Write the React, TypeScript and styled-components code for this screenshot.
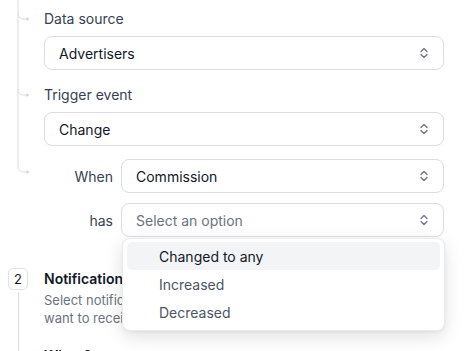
import React from 'react';
import styled, { createGlobalStyle } from 'styled-components';

const GlobalStyle = createGlobalStyle`
  html, body {
    margin: 0;
    padding: 0;
    overflow: hidden;
    background: #fff;
  }
  body {
    font-family: Inter, "Noto Sans", "Liberation Sans", sans-serif;
    -webkit-font-smoothing: antialiased;
  }
`;

const Page = styled.div`
  width: 467px;
  padding: 0 23px 0 8px;
  box-sizing: border-box;
`;

const Step = styled.div<{ $gap?: number }>`
  display: flex;
  align-items: stretch;
  margin-top: ${p => p.$gap ?? 0}px;
`;

const Rail = styled.div`
  width: 36px;
  flex-shrink: 0;
  display: flex;
  flex-direction: column;
  align-items: flex-start;
`;

const Fields = styled.div`
  flex: 1;
  min-width: 0;
  padding-top: 9px;
  display: flex;
  flex-direction: column;
`;

const Label = styled.div<{ $gap?: number }>`
  font-size: 14px;
  line-height: 20px;
  color: #374151;
  margin-top: ${p => p.$gap ?? 0}px;
  margin-bottom: 7px;
`;

const SelectBox = styled.div<{ $placeholder?: boolean }>`
  height: 34px;
  box-sizing: border-box;
  border: 1px solid #dcdce1;
  border-radius: 8px;
  background: #fff;
  display: flex;
  align-items: center;
  justify-content: space-between;
  padding: 0 13px 0 14px;
  font-size: 14px;
  color: ${p => (p.$placeholder ? '#6b7280' : '#111827')};
`;

const Conditions = styled.div`
  margin-top: 13px;
  display: grid;
  grid-template-columns: 69px 1fr;
  column-gap: 8px;
  row-gap: 10px;
  align-items: center;
`;

const RowLabel = styled.div`
  text-align: right;
  font-size: 14px;
  color: #374151;
`;

const Anchor = styled.div`
  position: relative;
`;

const Menu = styled.div`
  position: absolute;
  top: calc(100% + 1px);
  left: 1px;
  width: 100%;
  box-sizing: border-box;
  background: #fff;
  border: 1px solid #ebebee;
  border-radius: 8px;
  box-shadow: 0 6px 18px rgba(0, 0, 0, 0.12), 0 1px 3px rgba(0, 0, 0, 0.05);
  padding: 3px 4px 4px;
  z-index: 10;
`;

const MenuItem = styled.div<{ $active?: boolean }>`
  height: 28px;
  display: flex;
  align-items: center;
  padding-left: 32px;
  border-radius: 5px;
  font-size: 14px;
  color: ${p => (p.$active ? '#111827' : '#4b5563')};
  background: ${p => (p.$active ? '#f3f4f6' : 'transparent')};
`;

const Badge = styled.div`
  width: 20px;
  height: 22px;
  box-sizing: border-box;
  border: 1px solid #e1e1e6;
  border-radius: 5px;
  display: flex;
  align-items: center;
  justify-content: center;
  font-size: 13px;
  color: #111827;
`;

const RailLine = styled.div`
  width: 0;
  flex: 1;
  margin: 2px 0 0 10px;
  border-left: 1px solid #dedbe8;
`;

const StepBody = styled.div`
  flex: 1;
  padding-top: 1px;
`;

const Title = styled.div<{ $gap?: number }>`
  font-size: 14px;
  line-height: 20px;
  font-weight: 600;
  color: #111827;
  margin-top: ${p => p.$gap ?? 0}px;
`;

const Desc = styled.div`
  font-size: 13px;
  line-height: 18px;
  color: #6b7280;
  margin-top: 2px;
`;

const Chevrons = () => (
  <svg width="12" height="12" viewBox="0 0 12 12" fill="none">
    <path d="M3 4.5 6 1.5 9 4.5M3 7.5 6 10.5 9 7.5" stroke="#6b7280" strokeWidth="1.3" strokeLinecap="round" strokeLinejoin="round" />
  </svg>
);

const Select = ({ value, placeholder }: { value?: string; placeholder?: string }) => (
  <SelectBox $placeholder={!value}>
    <span>{value ?? placeholder}</span>
    <Chevrons />
  </SelectBox>
);

const Connector = () => {
  const branch = (y: number) => `M10 ${y - 6} Q10 ${y} 16 ${y} L19 ${y}`;
  const arrow = (y: number) => `M18.5 ${y - 2} L21.5 ${y} L18.5 ${y + 2} Z`;
  return (
    <svg width="36" height="180" viewBox="0 0 36 180" fill="none">
      <path d="M10 0 L10 166 Q10 172 16 172 L19 172" stroke="#dedbe8" strokeWidth="1" />
      <path d={branch(19)} stroke="#dedbe8" strokeWidth="1" />
      <path d={branch(95)} stroke="#dedbe8" strokeWidth="1" />
      {[19, 95, 172].map(y => (
        <path key={y} d={arrow(y)} fill="#d4d1e0" />
      ))}
    </svg>
  );
};

const options = ['Changed to any', 'Increased', 'Decreased'];

export default function App() {
  return (
    <Page>
      <GlobalStyle />
      <Step>
        <Rail>
          <Connector />
        </Rail>
        <Fields>
          <Label>Data source</Label>
          <Select value="Advertisers" />
          <Label $gap={15}>Trigger event</Label>
          <Select value="Change" />
          <Conditions>
            <RowLabel>When</RowLabel>
            <Select value="Commission" />
            <RowLabel>has</RowLabel>
            <Anchor>
              <Select placeholder="Select an option" />
              <Menu>
                {options.map((o, i) => (
                  <MenuItem key={o} $active={i === 0}>{o}</MenuItem>
                ))}
              </Menu>
            </Anchor>
          </Conditions>
        </Fields>
      </Step>
      <Step $gap={31}>
        <Rail>
          <Badge>2</Badge>
          <RailLine />
        </Rail>
        <StepBody>
          <Title>Notifications</Title>
          <Desc>
            Select notification channels for the alerts you
            <br />
            want to receive when this trigger fires.
          </Desc>
          <Title $gap={19}>When?</Title>
          <Desc>Choose when notifications should be sent.</Desc>
          <Select value="Immediately" />
        </StepBody>
      </Step>
    </Page>
  );
}
